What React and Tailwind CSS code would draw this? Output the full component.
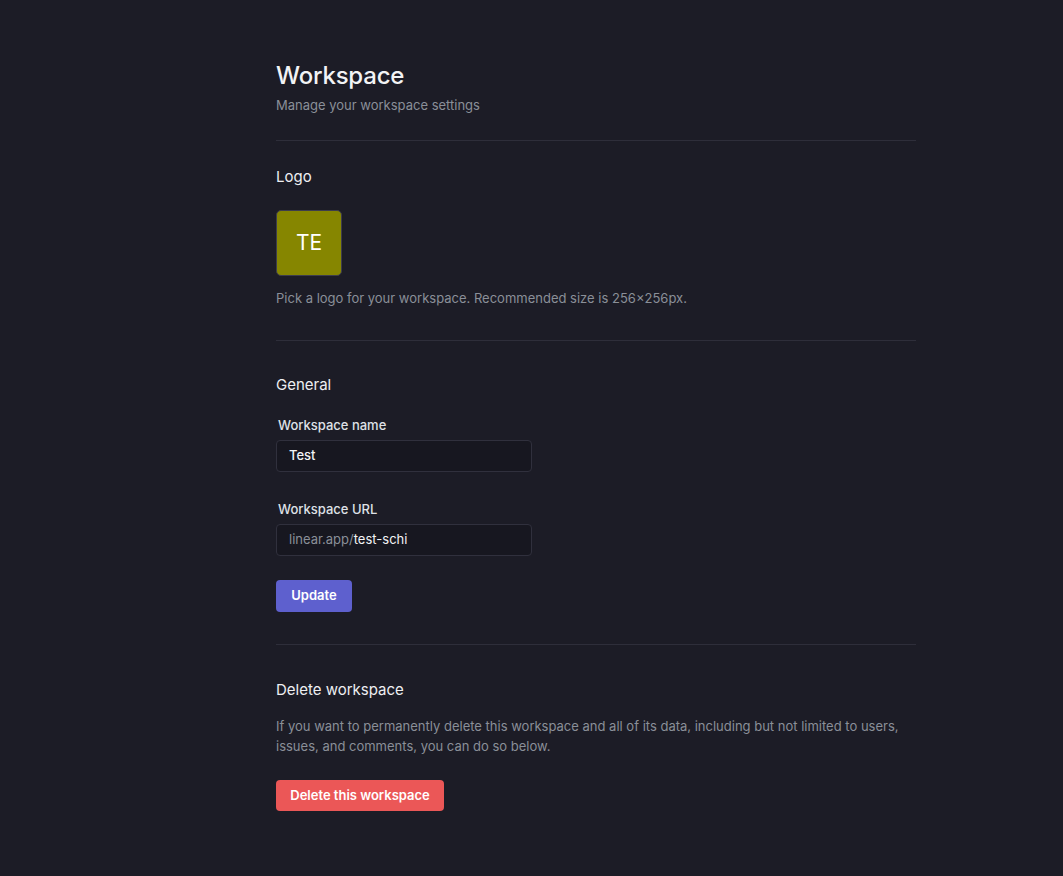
export default function App() {
  return (
    <div className="min-h-[876px] w-full bg-[#1c1c26] font-['Inter',sans-serif] text-[#eeeff2]">
      <div className="ml-[276px] w-[640px] pt-[60px]">
        <h1 className="text-[24px] leading-[32px] font-medium tracking-[-0.2px] text-[#f2f3f5]">Workspace</h1>
        <p className="mt-[3px] text-[13px] leading-[20px] text-[#8a8f98]">Manage your workspace settings</p>
        <div className="mt-[25px] h-px bg-[#2e2e3a]" />

        <h2 className="mt-[25px] text-[15px] leading-[22px] font-normal">Logo</h2>
        <div className="mt-[22px] flex h-[66px] w-[66px] items-center justify-center rounded-[5px] border border-[#3d3d4c] bg-[#868600] text-[21px] text-white">
          TE
        </div>
        <p className="mt-[12px] text-[13px] leading-[20px] text-[#8a8f98]">
          Pick a logo for your workspace. Recommended size is 256×256px.
        </p>
        <div className="mt-[32px] h-px bg-[#2e2e3a]" />

        <h2 className="mt-[33px] text-[15px] leading-[22px] font-normal">General</h2>
        <label className="mt-[21px] ml-[2px] block text-[13px] leading-[16px] font-medium text-[#dfe1e6]">Workspace name</label>
        <div className="mt-[7px] flex h-[32px] w-[256px] items-center rounded-[4px] border border-[#30303d] bg-[#171720] px-[12px] text-[13px] font-medium text-[#f2f3f5]">
          Test
        </div>
        <label className="mt-[29px] ml-[2px] block text-[13px] leading-[16px] font-medium text-[#dfe1e6]">Workspace URL</label>
        <div className="mt-[7px] flex h-[32px] w-[256px] items-center rounded-[4px] border border-[#30303d] bg-[#171720] px-[12px] text-[13px]">
          <span className="text-[#8a8f98]">linear.app/</span>
          <span className="text-[#f2f3f5]">test-schi</span>
        </div>
        <button className="mt-[24px] flex h-[32px] w-[76px] items-center justify-center rounded-[4px] bg-[#5e60ce] text-[13px] font-semibold text-white">
          Update
        </button>
        <div className="mt-[32px] h-px bg-[#2e2e3a]" />

        <h2 className="mt-[34px] text-[15px] leading-[22px] font-normal">Delete workspace</h2>
        <p className="mt-[15px] w-[630px] text-[13px] leading-[20px] text-[#8a8f98]">
          If you want to permanently delete this workspace and all of its data, including but not limited to users, issues, and comments, you can do so below.
        </p>
        <button className="mt-[24px] flex h-[31px] w-[168px] items-center justify-center rounded-[4px] bg-[#eb5757] text-[13px] font-semibold text-white">
          Delete this workspace
        </button>
      </div>
    </div>
  );
}
